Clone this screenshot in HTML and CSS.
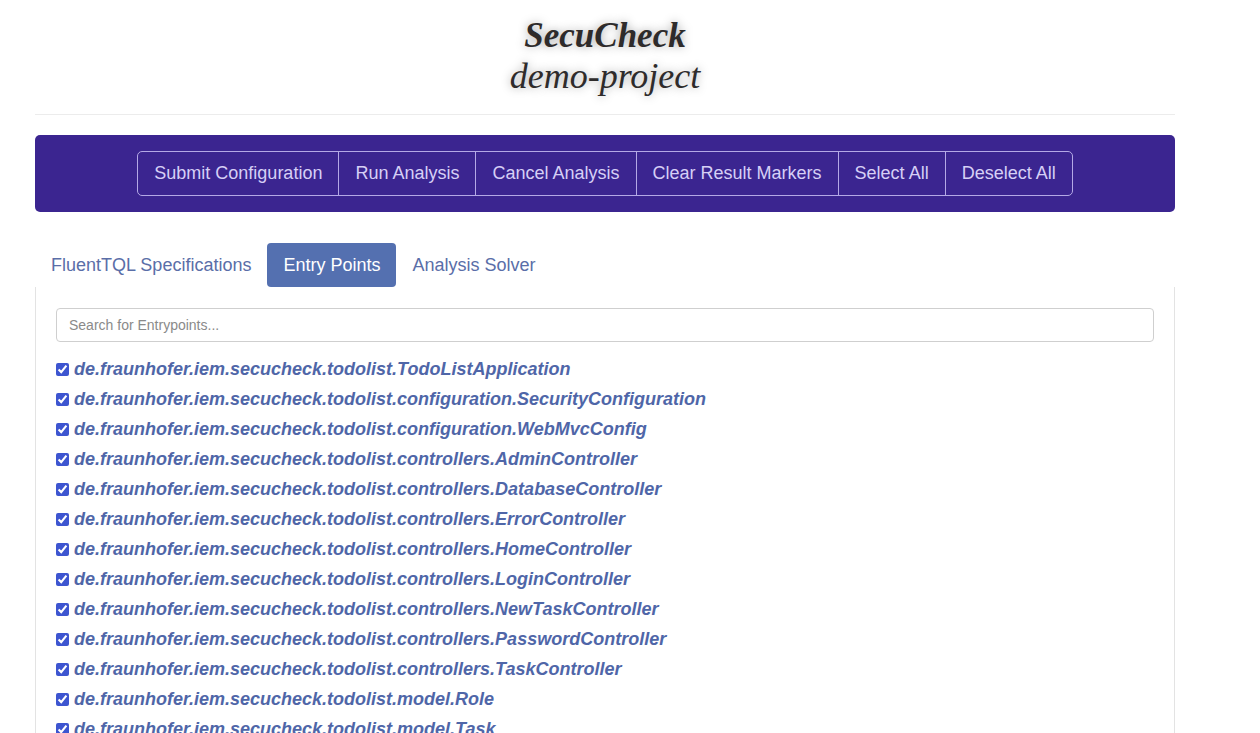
FILE: index.html
```html
<!DOCTYPE html>
<html>
<head>
<meta charset="utf-8">
<link rel="stylesheet" href="styles.css">
</head>
<body>
<div class="container">
  <header class="header">
    <div class="title">SecuCheck</div>
    <div class="subtitle">demo-project</div>
  </header>
  <hr class="rule">
  <div class="toolbar">
    <div class="btn-group">
      <button class="btn">Submit Configuration</button>
      <button class="btn">Run Analysis</button>
      <button class="btn">Cancel Analysis</button>
      <button class="btn">Clear Result Markers</button>
      <button class="btn">Select All</button>
      <button class="btn">Deselect All</button>
    </div>
  </div>
  <nav class="tabs">
    <a class="tab">FluentTQL Specifications</a>
    <a class="tab active">Entry Points</a>
    <a class="tab">Analysis Solver</a>
  </nav>
  <div class="panel">
    <input class="search" type="text" placeholder="Search for Entrypoints...">
    <ul class="list">
      <li><label><input type="checkbox" checked><span>de.fraunhofer.iem.secucheck.todolist.TodoListApplication</span></label></li>
      <li><label><input type="checkbox" checked><span>de.fraunhofer.iem.secucheck.todolist.configuration.SecurityConfiguration</span></label></li>
      <li><label><input type="checkbox" checked><span>de.fraunhofer.iem.secucheck.todolist.configuration.WebMvcConfig</span></label></li>
      <li><label><input type="checkbox" checked><span>de.fraunhofer.iem.secucheck.todolist.controllers.AdminController</span></label></li>
      <li><label><input type="checkbox" checked><span>de.fraunhofer.iem.secucheck.todolist.controllers.DatabaseController</span></label></li>
      <li><label><input type="checkbox" checked><span>de.fraunhofer.iem.secucheck.todolist.controllers.ErrorController</span></label></li>
      <li><label><input type="checkbox" checked><span>de.fraunhofer.iem.secucheck.todolist.controllers.HomeController</span></label></li>
      <li><label><input type="checkbox" checked><span>de.fraunhofer.iem.secucheck.todolist.controllers.LoginController</span></label></li>
      <li><label><input type="checkbox" checked><span>de.fraunhofer.iem.secucheck.todolist.controllers.NewTaskController</span></label></li>
      <li><label><input type="checkbox" checked><span>de.fraunhofer.iem.secucheck.todolist.controllers.PasswordController</span></label></li>
      <li><label><input type="checkbox" checked><span>de.fraunhofer.iem.secucheck.todolist.controllers.TaskController</span></label></li>
      <li><label><input type="checkbox" checked><span>de.fraunhofer.iem.secucheck.todolist.model.Role</span></label></li>
      <li><label><input type="checkbox" checked><span>de.fraunhofer.iem.secucheck.todolist.model.Task</span></label></li>
      <li><label><input type="checkbox" checked><span>de.fraunhofer.iem.secucheck.todolist.model.User</span></label></li>
    </ul>
  </div>
</div>
</body>
</html>
```
FILE: styles.css
```css
html, body {
  margin: 0;
  padding: 0;
  background: #fff;
  font-family: "Liberation Sans", Arial, sans-serif;
  overflow: hidden;
}
.container {
  width: 1140px;
  margin-left: 35px;
}
.header {
  padding-top: 16px;
  text-align: center;
  font-family: "Liberation Serif", "Times New Roman", serif;
  font-style: italic;
  color: #2e2b2b;
  text-shadow: 0 0 10px rgba(0, 0, 0, 0.35);
}
.title {
  font-weight: bold;
  font-size: 35px;
  line-height: 40px;
}
.subtitle {
  font-size: 36px;
  line-height: 40px;
}
.rule {
  border: 0;
  border-top: 1px solid #ececec;
  margin: 18px 0 20px 0;
}
.toolbar {
  background: #3b2590;
  border-radius: 5px;
  height: 77px;
  display: flex;
  justify-content: center;
  align-items: center;
}
.btn-group {
  display: flex;
}
.btn {
  font-family: "Liberation Sans", Arial, sans-serif;
  font-size: 18px;
  line-height: 27px;
  padding: 8px 16px;
  color: #d6cff6;
  background: transparent;
  border: 1px solid #b4a9e6;
  margin-left: -1px;
  border-radius: 0;
}
.btn:first-child {
  margin-left: 0;
  border-radius: 5px 0 0 5px;
}
.btn:last-child {
  border-radius: 0 5px 5px 0;
}
.tabs {
  display: flex;
  margin-top: 31px;
}
.tab {
  font-size: 18px;
  line-height: 28px;
  padding: 8px 16px;
  color: #5a6ea8;
  border-radius: 4px;
}
.active {
  background: #5470b0;
  color: #fff;
}
.panel {
  border-left: 1px solid #e3e3e3;
  border-right: 1px solid #e3e3e3;
  padding: 21px 20px 0 20px;
}
.search {
  box-sizing: border-box;
  width: 100%;
  height: 34px;
  border: 1px solid #cfcfcf;
  border-radius: 4px;
  padding: 0 12px;
  font-family: "Liberation Sans", Arial, sans-serif;
  font-size: 14px;
  color: #555;
  margin: 0;
}
.search::placeholder {
  color: #8a8a8a;
}
.list {
  list-style: none;
  margin: 12px 0 0 0;
  padding: 0;
}
.list li {
  height: 30px;
  display: flex;
  align-items: center;
}
.list label {
  display: flex;
  align-items: center;
}
.list input {
  width: 13px;
  height: 13px;
  margin: 0 5px 0 0;
  accent-color: #3d55d0;
}
.list span {
  font-size: 18px;
  font-weight: bold;
  font-style: italic;
  color: #4f66a8;
}
```
